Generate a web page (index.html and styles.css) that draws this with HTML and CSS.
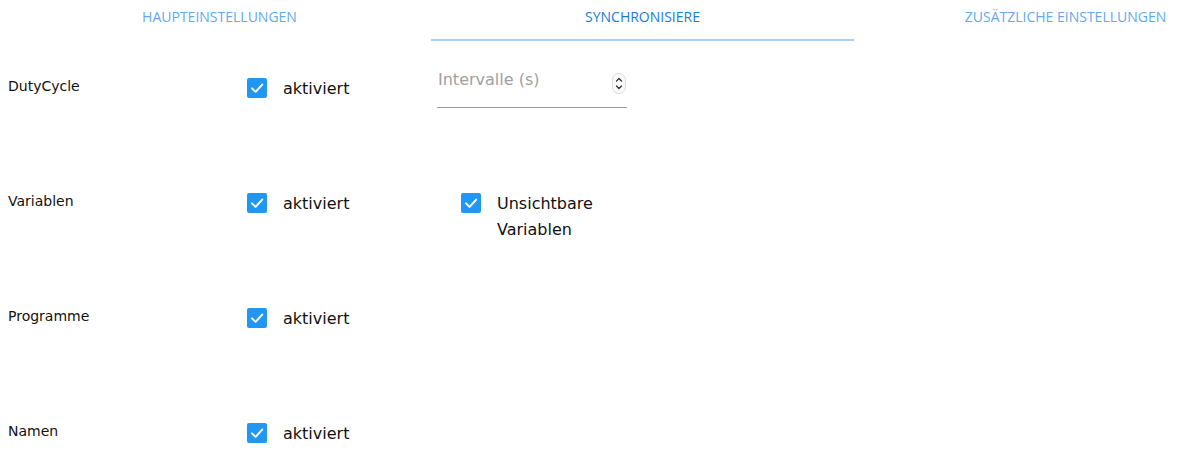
FILE: index.html
```html
<!DOCTYPE html>
<html lang="de">
<head>
<meta charset="utf-8">
<link rel="stylesheet" href="styles.css">
</head>
<body>
<nav class="tabs">
  <div class="tab">HAUPTEINSTELLUNGEN</div>
  <div class="tab active">SYNCHRONISIERE</div>
  <div class="tab">ZUSÄTZLICHE EINSTELLUNGEN</div>
</nav>
<main class="rows">
  <section class="row">
    <div class="label">DutyCycle</div>
    <div class="check"><span class="box"><svg viewBox="0 0 20 20"><path d="M5 10.4 L8.6 13.9 L15.2 6.6"/></svg></span><span class="text">aktiviert</span></div>
    <div class="field">
      <span class="placeholder">Intervalle (s)</span>
      <svg class="spin" viewBox="0 0 14 21"><rect x="0.5" y="0.5" width="13" height="20" rx="6.5"/><path d="M4.5 8 L7 5.5 L9.5 8 M4.5 13 L7 15.5 L9.5 13"/></svg>
    </div>
  </section>
  <section class="row">
    <div class="label">Variablen</div>
    <div class="check"><span class="box"><svg viewBox="0 0 20 20"><path d="M5 10.4 L8.6 13.9 L15.2 6.6"/></svg></span><span class="text">aktiviert</span></div>
    <div class="check extra"><span class="box"><svg viewBox="0 0 20 20"><path d="M5 10.4 L8.6 13.9 L15.2 6.6"/></svg></span><span class="text narrow">Unsichtbare Variablen</span></div>
  </section>
  <section class="row">
    <div class="label">Programme</div>
    <div class="check"><span class="box"><svg viewBox="0 0 20 20"><path d="M5 10.4 L8.6 13.9 L15.2 6.6"/></svg></span><span class="text">aktiviert</span></div>
  </section>
  <section class="row">
    <div class="label">Namen</div>
    <div class="check"><span class="box"><svg viewBox="0 0 20 20"><path d="M5 10.4 L8.6 13.9 L15.2 6.6"/></svg></span><span class="text">aktiviert</span></div>
  </section>
</main>
</body>
</html>
```

FILE: styles.css
```css
html, body {
  margin: 0;
  background: #ffffff;
  overflow: hidden;
}
body {
  height: 475px;
  padding: 0 8px;
  font-family: "DejaVu Sans", Verdana, sans-serif;
  color: #111;
}
.tabs {
  display: flex;
  width: 1269px;
}
.tab {
  flex: 0 0 423px;
  box-sizing: border-box;
  height: 41px;
  padding-top: 8px;
  text-align: center;
  font-family: "Open Sans", "DejaVu Sans", sans-serif;
  font-size: 14px;
  line-height: 18px;
  color: #64a9ec;
  border-bottom: 2px solid transparent;
}
.tab.active {
  color: #1a7ad9;
  border-bottom-color: #a6d2f8;
}
.rows {
  margin-top: 25px;
}
.row {
  display: grid;
  grid-template-columns: 239px 190px 1fr;
  align-items: start;
  height: 115px;
}
.label {
  padding-top: 7px;
  font-size: 14px;
  line-height: 26px;
}
.check {
  display: flex;
  align-items: flex-start;
  padding-top: 10px;
}
.check.extra {
  padding-left: 24px;
}
.box {
  flex: 0 0 20px;
  width: 20px;
  height: 20px;
  margin-top: 2px;
  margin-right: 16px;
  border-radius: 2px;
  background: #2196f3;
}
.box svg {
  display: block;
  width: 20px;
  height: 20px;
  fill: none;
  stroke: #fff;
  stroke-width: 2;
  stroke-linecap: round;
  stroke-linejoin: round;
}
.text {
  font-size: 16px;
  line-height: 26px;
}
.text.narrow {
  width: 110px;
}
.field {
  display: flex;
  justify-content: space-between;
  align-items: flex-start;
  width: 190px;
  height: 40px;
  margin-top: 1px;
  border-bottom: 1px solid #9a9a9a;
}
.placeholder {
  padding-top: 0;
  padding-left: 1px;
  font-size: 16px;
  line-height: 26px;
  color: #a0a0a0;
}
.spin {
  width: 14px;
  height: 21px;
  margin-top: 6px;
  margin-right: 1px;
}
.spin rect {
  fill: #fafafa;
  stroke: #dcdcdc;
}
.spin path {
  fill: none;
  stroke: #333;
  stroke-width: 1.3;
  stroke-linecap: round;
  stroke-linejoin: round;
}
```
